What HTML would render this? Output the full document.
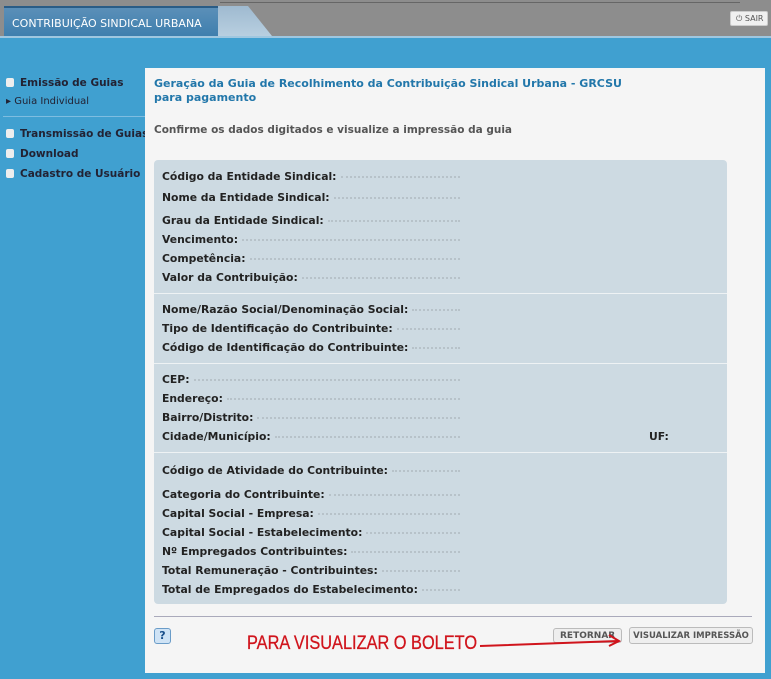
<!DOCTYPE html>
<html><head><meta charset="utf-8"><style>
*{margin:0;padding:0;box-sizing:border-box}
body{width:771px;height:679px;overflow:hidden;background:#40a0d0;font-family:"DejaVu Sans","Liberation Sans",sans-serif;position:relative}
.abs{position:absolute}
.top{left:0;top:0;width:771px;height:36px;background:#8d8d8d}
.tab{left:4px;top:6px;width:214px;height:30px;background:linear-gradient(#5b8fb8,#3f7fae);color:#fff;font-size:11px;padding:9px 0 0 8px;border-top:2px solid #2a5c86}
.tabr{left:212px;top:6px;width:60px;height:30px;background:linear-gradient(#9fbad0,#b8cfe0);clip-path:polygon(0 0,60% 0,100% 100%,0 100%)}
.sair{left:730px;top:11px;width:38px;height:15px;background:#f0f0f0;border:1px solid #ccc;font-size:8px;color:#555;padding:2px 0 0 5px;border-radius:2px}
.gline{left:220px;top:2px;width:520px;height:1px;background:#666}
.menu{font-size:10.5px;font-weight:bold;color:#223;left:6px}
.menu i{display:inline-block;width:8px;height:9px;background:#eee;border-radius:2px;margin-right:6px;vertical-align:-1px}
.panel{left:145px;top:68px;width:620px;height:605px;background:#f5f5f5}
.h{left:154px;top:77px;color:#2277aa;font-size:11px;font-weight:bold;line-height:14px}
.box{left:154px;top:160px;width:573px;height:444px;background:#cddae2;border-radius:4px}
.f{position:absolute;left:8px;width:298px;display:flex;font-size:10.8px;font-weight:bold;color:#222;white-space:nowrap}
.f b{flex:1;margin-left:4px;border-bottom:2px dotted #b7c2c9;height:8px}
.sep{position:absolute;left:0;width:573px;height:1px;background:#eef2f4}
.btn{font-size:9px;font-weight:bold;color:#555;background:#eee;border:1px solid #bbb;border-radius:3px;height:15px;padding:2px 6px 0;white-space:nowrap}
</style></head><body>
<div class="abs top"></div>
<div class="abs gline"></div>
<div class="abs tabr"></div>
<div class="abs tab">CONTRIBUIÇÃO SINDICAL URBANA</div>
<div class="abs sair">⏻ SAIR</div>
<div class="abs" style="left:0;top:36px;width:771px;height:2px;background:#9fc7e0"></div>
<div class="abs menu" style="top:77px"><i></i>Emissão de Guias</div>
<div class="abs" style="left:6px;top:96px;font-size:10px;color:#223">▸ Guia Individual</div>
<div class="abs" style="left:3px;top:116px;width:142px;height:1px;background:#7fbde0"></div>
<div class="abs menu" style="top:128px"><i></i>Transmissão de Guias</div>
<div class="abs menu" style="top:148px"><i></i>Download</div>
<div class="abs menu" style="top:168px"><i></i>Cadastro de Usuário</div>
<div class="abs panel"></div>
<div class="abs h">Geração da Guia de Recolhimento da Contribuição Sindical Urbana - GRCSU<br>para pagamento</div>
<div class="abs" style="left:154px;top:124px;font-size:10.5px;font-weight:bold;color:#555">Confirme os dados digitados e visualize a impressão da guia</div>
<div class="abs box">
<div class="f" style="top:10px">Código da Entidade Sindical:<b></b></div>
<div class="f" style="top:31px">Nome da Entidade Sindical:<b></b></div>
<div class="f" style="top:54px">Grau da Entidade Sindical:<b></b></div>
<div class="f" style="top:73px">Vencimento:<b></b></div>
<div class="f" style="top:92px">Competência:<b></b></div>
<div class="f" style="top:111px">Valor da Contribuição:<b></b></div>
<div class="sep" style="top:133px"></div>
<div class="f" style="top:143px">Nome/Razão Social/Denominação Social:<b></b></div>
<div class="f" style="top:162px">Tipo de Identificação do Contribuinte:<b></b></div>
<div class="f" style="top:181px">Código de Identificação do Contribuinte:<b></b></div>
<div class="sep" style="top:203px"></div>
<div class="f" style="top:213px">CEP:<b></b></div>
<div class="f" style="top:232px">Endereço:<b></b></div>
<div class="f" style="top:251px">Bairro/Distrito:<b></b></div>
<div class="f" style="top:270px">Cidade/Município:<b></b></div>
<div class="f" style="top:270px;left:495px;width:auto">UF:</div>
<div class="sep" style="top:292px"></div>
<div class="f" style="top:304px">Código de Atividade do Contribuinte:<b></b></div>
<div class="f" style="top:328px">Categoria do Contribuinte:<b></b></div>
<div class="f" style="top:347px">Capital Social - Empresa:<b></b></div>
<div class="f" style="top:366px">Capital Social - Estabelecimento:<b></b></div>
<div class="f" style="top:385px">Nº Empregados Contribuintes:<b></b></div>
<div class="f" style="top:404px">Total Remuneração - Contribuintes:<b></b></div>
<div class="f" style="top:423px">Total de Empregados do Estabelecimento:<b></b></div>
</div>
<div class="abs" style="left:154px;top:616px;width:598px;height:1px;background:#aab"></div>
<div class="abs" style="left:154px;top:628px;width:17px;height:16px;background:#cfe3f5;border:1px solid #6a9cc8;border-radius:3px;font-size:11px;font-weight:bold;color:#1a4f8a;text-align:center;line-height:14px">?</div>
<div class="abs btn" style="left:553px;top:628px">RETORNAR</div>
<div class="abs btn" style="left:629px;top:627px;width:124px;height:17px;padding:3px 0 0;text-align:center;font-size:8.5px">VISUALIZAR IMPRESSÃO</div>
<div class="abs" style="left:247px;top:633px;color:#d0141c;font-family:'Liberation Sans',sans-serif;font-size:19px;transform:scaleX(0.86);transform-origin:left;-webkit-text-stroke:0.3px #d0141c">PARA VISUALIZAR O BOLETO</div>
<svg class="abs" style="left:478px;top:630px" width="150" height="20"><path d="M2 16 L140 11 M131 5 L141 11 L131 16" stroke="#d0141c" stroke-width="2" fill="none"/></svg>
</body></html>
